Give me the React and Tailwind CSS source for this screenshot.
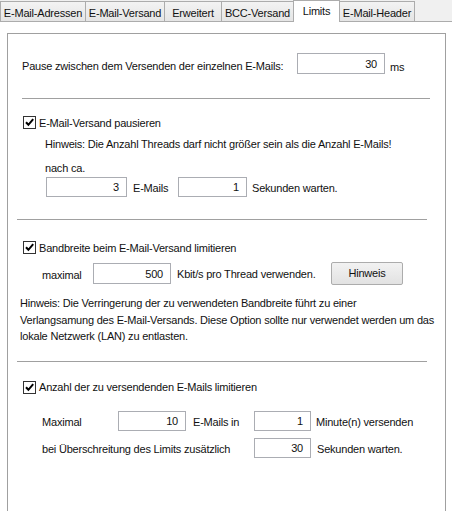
import React from 'react';

const tabs = [
  { label: 'E-Mail-Adressen', w: 'w-[86px]' },
  { label: 'E-Mail-Versand', w: 'w-[80px]' },
  { label: 'Erweitert', w: 'w-[58px]' },
  { label: 'BCC-Versand', w: 'w-[73px]' },
  { label: 'Limits', w: 'w-[47px]', active: true },
  { label: 'E-Mail-Header', w: 'w-[76px]' },
];

function Tab({ label, w, active }) {
  if (active) {
    return (
      <div className={`${w} h-[22px] -ml-px -mb-px relative z-10 bg-white border border-b-0 border-[#acacac] flex items-start justify-center pt-[3px] whitespace-nowrap`}>
        {label}
      </div>
    );
  }
  return (
    <div className={`${w} h-[20px] -ml-px first:ml-0 bg-gradient-to-b from-[#f3f3f3] to-[#e5e5e5] border border-b-0 border-[#acacac] flex items-center justify-center pt-[2px] whitespace-nowrap`}>
      {label}
    </div>
  );
}

function Check({ label, className = '' }) {
  return (
    <div className={`flex items-center h-[13px] ${className}`}>
      <span className="w-[13px] h-[13px] border border-[#333] bg-white flex items-center justify-center shrink-0">
        <svg width="11" height="11" viewBox="0 0 11 11">
          <path d="M2 5.2 L4.4 7.8 L9.2 2.2" stroke="#000" strokeWidth="2" fill="none" />
        </svg>
      </span>
      <span className="ml-[3px]">{label}</span>
    </div>
  );
}

function Field({ value, w, h = 'h-[20px]' }) {
  return (
    <div className={`${w} ${h} shrink-0 border border-[#abadb3] bg-white flex items-center justify-end pr-[7px]`}>
      {value}
    </div>
  );
}

function Sep({ className = '' }) {
  return <div className={`h-px bg-[#a0a0a0] ${className}`} />;
}

export default function App() {
  return (
    <div className="w-[452px] h-[511px] bg-white overflow-hidden flex flex-col text-[11px] leading-[14px] tracking-[-0.2px] text-[#111] font-['Liberation_Sans',Arial,sans-serif]">
      {/* Tab strip */}
      <div className="h-[22px] shrink-0 flex items-end bg-[#f0f0f0] border-b border-[#acacac]">
        {tabs.map((t) => (
          <Tab key={t.label} {...t} />
        ))}
      </div>

      {/* Page frame */}
      <div className="ml-[7px] mt-[11px] w-[439px] flex-1 border border-b-0 border-[#a0a0a0] flex flex-col whitespace-nowrap">
        {/* Pause */}
        <div className="mt-[19px] ml-[14px] flex items-start">
          <span className="w-[275px] pt-[6px]">Pause zwischen dem Versenden der einzelnen E-Mails:</span>
          <Field value="30" w="w-[88px]" h="h-[21px]" />
          <span className="ml-[5px] pt-[7px]">ms</span>
        </div>

        <Sep className="mt-[24px] ml-[14px] w-[408px]" />

        {/* E-Mail-Versand pausieren */}
        <Check label="E-Mail-Versand pausieren" className="mt-[17px] ml-[15px]" />
        <div className="mt-[8px] ml-[37px]">Hinweis: Die Anzahl Threads darf nicht größer sein als die Anzahl E-Mails!</div>
        <div className="mt-[10px] ml-[37px]">nach ca.</div>
        <div className="mt-[2px] ml-[38px] flex items-center">
          <Field value="3" w="w-[81px]" />
          <span className="ml-[6px] w-[45px] pt-[2px]">E-Mails</span>
          <Field value="1" w="w-[69px]" />
          <span className="ml-[5px] pt-[2px]">Sekunden warten.</span>
        </div>

        <Sep className="mt-[22px] ml-[9px] w-[410px]" />

        {/* Bandbreite */}
        <Check label="Bandbreite beim E-Mail-Versand limitieren" className="mt-[21px] ml-[15px]" />
        <div className="mt-[8px] ml-[34px] flex items-center h-[23px]">
          <span className="w-[51px] pt-[3px]">maximal</span>
          <Field value="500" w="w-[78px]" h="h-[21px]" />
          <span className="ml-[6px] w-[154px]">Kbit/s pro Thread verwenden.</span>
          <button className="w-[72px] h-[23px] border border-[#acacac] rounded-[2px] bg-gradient-to-b from-[#f2f2f2] to-[#e2e2e2] flex items-start justify-center pt-[3px]">
            Hinweis
          </button>
        </div>
        <p className="mt-[10px] ml-[12px] leading-[16.5px]">
          Hinweis: Die Verringerung der zu verwendeten Bandbreite führt zu einer
          <br />
          Verlangsamung des E-Mail-Versands. Diese Option sollte nur verwendet werden um das
          <br />
          lokale Netzwerk (LAN) zu entlasten.
        </p>

        <Sep className="mt-[16px] ml-[9px] w-[410px]" />

        {/* Anzahl limitieren */}
        <Check label="Anzahl der zu versendenden E-Mails limitieren" className="mt-[19px] ml-[15px]" />
        <div className="mt-[17px] ml-[34px] flex items-center">
          <span className="w-[76px] pt-[3px]">Maximal</span>
          <Field value="10" w="w-[68px]" />
          <span className="ml-[7px] w-[61px] pt-[2px]">E-Mails in</span>
          <Field value="1" w="w-[57px]" />
          <span className="ml-[5px] pt-[2px]">Minute(n) versenden</span>
        </div>
        <div className="mt-[7px] ml-[34px] flex items-center">
          <span className="w-[212px] pt-[3px]">bei Überschreitung des Limits zusätzlich</span>
          <Field value="30" w="w-[57px]" />
          <span className="ml-[6px] pt-[3px]">Sekunden warten.</span>
        </div>
      </div>
    </div>
  );
}
